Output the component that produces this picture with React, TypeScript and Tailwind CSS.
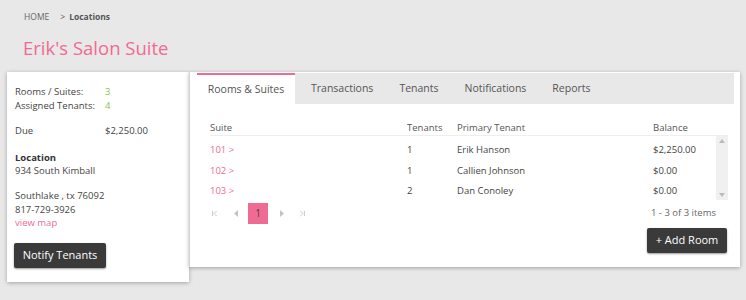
import { ChevronFirst, ChevronLast } from "lucide-react";

type Room = { suite: string; tenants: number; primary: string; balance: string };

const rooms: Room[] = [
  { suite: "101", tenants: 1, primary: "Erik Hanson", balance: "$2,250.00" },
  { suite: "102", tenants: 1, primary: "Callien Johnson", balance: "$0.00" },
  { suite: "103", tenants: 2, primary: "Dan Conoley", balance: "$0.00" }
];

const tabs = ["Rooms & Suites", "Transactions", "Tenants", "Notifications", "Reports"];

function TriangleLeft() {
  return (
    <svg width="5" height="7" viewBox="0 0 5 7">
      <path d="M4 0 L0 3.5 L4 7 Z" fill="#c4c4c4" />
    </svg>
  );
}

function TriangleRight() {
  return (
    <svg width="5" height="7" viewBox="0 0 5 7">
      <path d="M1 0 L5 3.5 L1 7 Z" fill="#c4c4c4" />
    </svg>
  );
}

export default function App() {
  return (
    <div className="h-[300px] w-[746px] overflow-hidden bg-[#e8e8e8] font-['Open_Sans',sans-serif] text-[#444]">
      <div className="flex items-center gap-[11px] pl-[24px] pt-[11px] text-[8.5px] leading-[12px]">
        <span className="text-[#666]">HOME</span>
        <span className="font-bold text-[#555]">
          <span className="mr-[4px] font-normal">&gt;</span>Locations
        </span>
      </div>
      <h1 className="mt-[12px] pl-[23px] text-[18.5px] leading-[26px] text-[#f06b93]">Erik's Salon Suite</h1>

      <div className="mt-[11px] flex items-start pl-[7px]">
        <aside className="h-[210px] w-[182px] bg-white pl-[8px] pr-[8px] pt-[13px] text-[9.5px] leading-[13.5px] text-[#444] shadow-[0_1px_4px_rgba(0,0,0,0.3)]">
          <div className="grid grid-cols-[90px_1fr]">
            <span>Rooms / Suites:</span>
            <span className="text-[#8bc34a]">3</span>
            <span>Assigned Tenants:</span>
            <span className="text-[#8bc34a]">4</span>
          </div>
          <div className="mt-[12px] grid grid-cols-[90px_1fr]">
            <span>Due</span>
            <span>$2,250.00</span>
          </div>
          <div className="mt-[13px] font-bold text-[#333]">Location</div>
          <div>934 South Kimball</div>
          <div className="mt-[11.5px]">Southlake , tx 76092</div>
          <div>817-729-3926</div>
          <div className="text-[#f06b93]">view map</div>
          <button
            type="button"
            className="mt-[13px] h-[25px] w-[92px] -ml-[1px] rounded-[2px] bg-[#3a3a3a] text-[11px] text-white shadow-[0_1px_2px_rgba(0,0,0,0.4)]"
          >
            Notify Tenants
          </button>
        </aside>

        <section className="h-[195px] w-[551px] border-l border-[#d4d4d4] bg-white pl-[7px] pr-[6px] pt-[1px] shadow-[0_1px_4px_rgba(0,0,0,0.3)]">
          <div className="flex h-[31px] bg-[#e8e8e8]">
            {tabs.map((tab, index) => (
              <div
                key={tab}
                className={
                  index === 0
                    ? "mr-[3px] flex h-[31px] w-[98px] items-center justify-center border-t-2 border-[#f06b93] bg-white text-[10.5px] text-[#555]"
                    : "flex h-[31px] items-center px-[13px] text-[10.5px] text-[#555]"
                }
              >
                {tab}
              </div>
            ))}
          </div>

          <div className="pl-[13px] pr-[6px] pt-[17px] text-[9.5px] text-[#444]">
            <div className="flex h-[15px] items-center border-b border-[#eee] pr-[20px] text-[#555]">
              <span className="w-[197px]">Suite</span>
              <span className="w-[50px]">Tenants</span>
              <span className="w-[196px]">Primary Tenant</span>
              <span>Balance</span>
            </div>
            <div className="flex">
              <div className="flex-1 pt-[4px]">
                {rooms.map((room) => (
                  <div key={room.suite} className="flex h-[20.5px] items-center">
                    <span className="w-[197px] text-[#f06b93]">{room.suite} &gt;</span>
                    <span className="w-[50px]">{room.tenants}</span>
                    <span className="w-[196px]">{room.primary}</span>
                    <span>{room.balance}</span>
                  </div>
                ))}
              </div>
              <div className="flex h-[64px] w-[12px] flex-col items-center justify-between bg-[#f0f0f0] py-[3px]">
                <svg width="6" height="4" viewBox="0 0 6 4">
                  <path d="M0 4 L3 0 L6 4 Z" fill="#bbb" />
                </svg>
                <svg width="6" height="4" viewBox="0 0 6 4">
                  <path d="M0 0 L3 4 L6 0 Z" fill="#bbb" />
                </svg>
              </div>
            </div>

            <div className="mt-[1px] flex items-center justify-between pr-[12px]">
              <div className="flex items-center">
                <span className="flex w-[9px] justify-center text-[#c4c4c4]">
                  <ChevronFirst size={9} strokeWidth={2.5} />
                </span>
                <span className="ml-[15px] flex w-[5px] justify-center">
                  <TriangleLeft />
                </span>
                <span className="ml-[9px] flex h-[21px] w-[20px] items-center justify-center bg-[#f06b93] text-[10px] text-[#444]">
                  1
                </span>
                <span className="ml-[11px] flex w-[5px] justify-center">
                  <TriangleRight />
                </span>
                <span className="ml-[14px] flex w-[9px] justify-center text-[#c4c4c4]">
                  <ChevronLast size={9} strokeWidth={2.5} />
                </span>
              </div>
              <span className="text-[#666]">1 - 3 of 3 items</span>
            </div>

            <div className="mt-[4px] flex justify-end pr-[1px]">
              <button
                type="button"
                className="h-[25px] w-[80px] rounded-[2px] bg-[#3a3a3a] text-[11px] text-white shadow-[0_1px_2px_rgba(0,0,0,0.4)]"
              >
                + Add Room
              </button>
            </div>
          </div>
        </section>
      </div>
    </div>
  );
}
